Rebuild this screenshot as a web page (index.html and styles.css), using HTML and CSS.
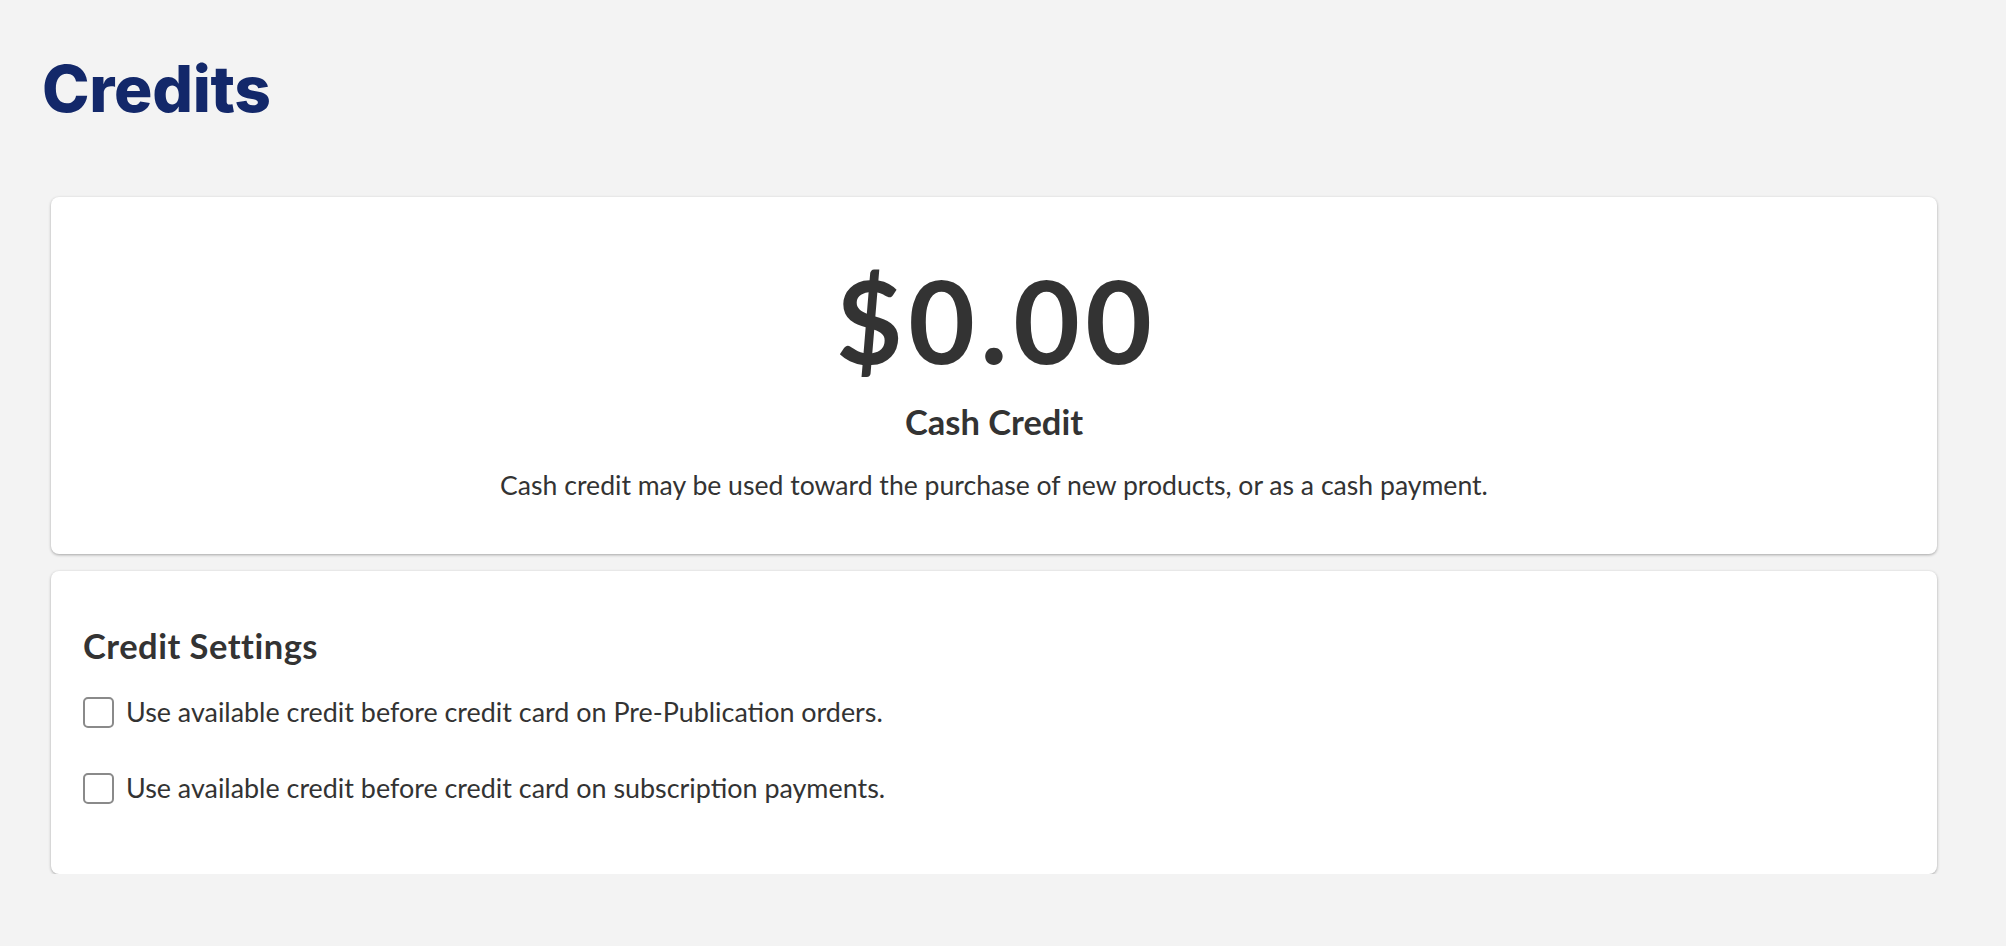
FILE: index.html
```html
<!DOCTYPE html>
<html lang="en">
<head>
<meta charset="utf-8">
<title>Credits</title>
<link rel="stylesheet" href="styles.css">
</head>
<body>
<header class="page-header">
  <h1 class="page-title">Credits</h1>
</header>
<main class="cards">
  <section class="card balance-card">
    <div class="balance-amount">$0.00</div>
    <h2 class="balance-label">Cash Credit</h2>
    <p class="balance-note">Cash credit may be used toward the purchase of new products, or as a cash payment.</p>
  </section>
  <section class="card settings-card">
    <h2 class="settings-title">Credit Settings</h2>
    <label class="option">
      <input type="checkbox" class="option-box">
      <span class="option-text">Use available credit before credit card on Pre-Publication orders.</span>
    </label>
    <label class="option">
      <input type="checkbox" class="option-box">
      <span class="option-text">Use available credit before credit card on subscription payments.</span>
    </label>
  </section>
</main>
</body>
</html>
```

FILE: styles.css
```css
html, body {
  margin: 0;
  padding: 0;
}
body {
  background: #f3f3f3;
  font-family: "Lato", "Noto Sans", sans-serif;
  color: #333333;
}
.page-header {
  padding: 52px 0 0 42px;
  height: 145px;
  box-sizing: border-box;
}
.page-title {
  margin: 0;
  font-family: "Inter", "Lato", sans-serif;
  font-weight: 800;
  font-size: 64px;
  line-height: 74px;
  color: #13286a;
  letter-spacing: -0.3px;
}
.cards {
  display: flex;
  flex-direction: column;
  gap: 17px;
  padding: 52px 69px 0 51px;
}
.card {
  background: #ffffff;
  border-radius: 8px;
  box-shadow: 0 1px 3px rgba(0, 0, 0, 0.32);
}
.balance-card {
  height: 357px;
  box-sizing: border-box;
  display: flex;
  flex-direction: column;
  align-items: center;
  padding-top: 57px;
}
.balance-amount {
  font-weight: 700;
  font-size: 115px;
  line-height: 130px;
  letter-spacing: 5.5px;
  margin-right: -5.5px;
  color: #333333;
}
.balance-label {
  margin: 18px 0 0;
  font-size: 34.5px;
  font-weight: 700;
  line-height: 40px;
}
.balance-note {
  margin: 27px 0 0;
  font-size: 26.6px;
  line-height: 32px;
}
.settings-card {
  height: 303px;
  box-sizing: border-box;
  padding: 55px 32px 0 32px;
}
.settings-title {
  margin: 0 0 30px;
  font-size: 34.5px;
  font-weight: 700;
  line-height: 40px;
  letter-spacing: 0.5px;
}
.option {
  display: flex;
  align-items: center;
  gap: 12px;
  height: 32px;
  margin-bottom: 44px;
  font-size: 26.9px;
  line-height: 32px;
}
.option-box {
  appearance: none;
  flex: none;
  margin: 0;
  width: 31px;
  height: 31px;
  border: 2px solid #8a8a8a;
  border-radius: 5px;
  background: #fff;
}
```
